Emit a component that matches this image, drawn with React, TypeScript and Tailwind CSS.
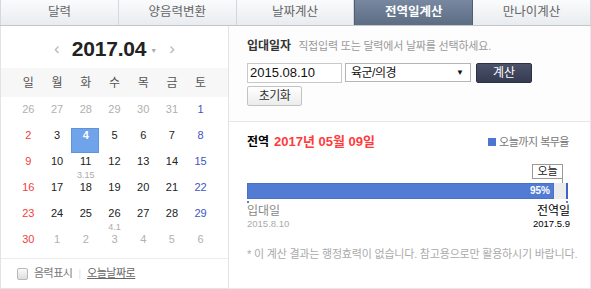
import { useState } from "react";

const TABS = ["달력", "양음력변환", "날짜계산", "전역일계산", "만나이계산"];
const WEEKDAYS = ["일", "월", "화", "수", "목", "금", "토"];

interface Day {
  day: number;
  other?: boolean;
  lunar?: string;
}

const WEEKS: Day[][] = [
  [
    { day: 26, other: true },
    { day: 27, other: true },
    { day: 28, other: true },
    { day: 29, other: true },
    { day: 30, other: true },
    { day: 31, other: true },
    { day: 1 },
  ],
  [2, 3, 4, 5, 6, 7, 8].map((d) => ({ day: d })),
  [9, 10, 11, 12, 13, 14, 15].map((d) => ({
    day: d,
    lunar: d === 11 ? "3.15" : undefined,
  })),
  [16, 17, 18, 19, 20, 21, 22].map((d) => ({ day: d })),
  [23, 24, 25, 26, 27, 28, 29].map((d) => ({
    day: d,
    lunar: d === 26 ? "4.1" : undefined,
  })),
  [
    { day: 30 },
    { day: 1, other: true },
    { day: 2, other: true },
    { day: 3, other: true },
    { day: 4, other: true },
    { day: 5, other: true },
    { day: 6, other: true },
  ],
];

const FONT = "font-['Liberation_Sans','Noto_Sans_CJK_KR',sans-serif]";

const dayColor = (d: Day, col: number) => {
  if (d.other) return "text-[#b0b0b0]";
  if (col === 0) return "text-[#f23c3c]";
  if (col === 6) return "text-[#3d56c0]";
  return "text-[#222]";
};

const Calendar = () => {
  const [selected] = useState(4);

  return (
    <div className="w-[229px] shrink-0 flex flex-col border-l border-r border-b border-[#e3e3e3]">
      <div className="h-[42px] pt-[2px] flex items-center justify-center">
        <span className="text-[#b5b5b5] text-[17px] leading-none mr-[12px]">‹</span>
        <span className="text-[21px] font-bold text-[#222] leading-none tracking-[-0.2px]">
          2017.04
        </span>
        <span className="text-[#aaa] text-[7px] ml-[4px] mt-[4px] leading-none">▼</span>
        <span className="text-[#b5b5b5] text-[17px] leading-none ml-[12px]">›</span>
      </div>

      <div className="h-[29px] bg-[#f7f7f7] px-[13px] grid grid-cols-7 items-center">
        {WEEKDAYS.map((w) => (
          <div key={w} className="text-center text-[12px] text-[#555] leading-none">
            {w}
          </div>
        ))}
      </div>

      <div className="mt-[3px] px-[13px] flex flex-col">
        {WEEKS.map((week, wi) => (
          <div key={wi} className="grid grid-cols-7 h-[26px]">
            {week.map((d, ci) => {
              const active = !d.other && d.day === selected;
              return (
                <div key={ci} className="relative flex flex-col items-center">
                  {active && (
                    <div className="absolute left-[0px] top-[2px] w-[28px] h-[25px] bg-[#6fa3ea] border border-[#5f93dd]" />
                  )}
                  <span
                    className={`relative mt-[2px] text-[11px] leading-[14px] ${
                      active ? "text-white font-bold" : dayColor(d, ci)
                    }`}>
                    {d.day}
                  </span>
                  {d.lunar && (
                    <span className="relative text-[9px] leading-[10px] text-[#aaa] mt-[2px]">
                      {d.lunar}
                    </span>
                  )}
                </div>
              );
            })}
          </div>
        ))}
      </div>

      <div className="mt-[2px] border-t border-[#ececec] flex-1 flex items-center pl-[16px]">
        <span className="w-[11px] h-[12px] rounded-[2px] border border-[#b9b9b9] bg-[linear-gradient(to_bottom,#fafafa,#dedede)] mr-[6px]" />
        <span className="text-[11px] text-[#777] tracking-[-0.5px]">음력표시</span>
        <span className="text-[10px] text-[#ddd] mx-[6px]">|</span>
        <a className="text-[11px] text-[#666] tracking-[-0.5px] underline cursor-pointer">
          오늘날짜로
        </a>
      </div>
    </div>
  );
};

const Calculator = () => {
  return (
    <div className="flex-1 min-w-0 flex flex-col border-r border-b border-[#e8e8e8]">
      <div className="pl-[18px] pt-[12px] pb-[14px] border-b border-[#e6e6e6] bg-[#fdfdfd]">
        <div className="flex items-center h-[16px]">
          <span className="text-[12px] font-bold text-[#333] mr-[7px]">입대일자</span>
          <span className="text-[11px] text-[#999] tracking-[-0.2px]">
            직접입력 또는 달력에서 날짜를 선택하세요.
          </span>
        </div>
        <div className="flex mt-[9px] h-[20px]">
          <div className="w-[95px] h-[20px] border border-[#c9c9c9] bg-white flex items-center pl-[2px] text-[13px] text-[#111]">
            2015.08.10
          </div>
          <div className="w-[126px] h-[19px] ml-[3px] border border-[#b5b5b5] bg-white flex items-center justify-between pl-[5px] pr-[6px]">
            <span className="text-[12px] text-[#111] tracking-[-0.5px]">육군/의경</span>
            <span className="text-[8px] text-[#111]">▼</span>
          </div>
          <button className="w-[56px] h-[20px] ml-[5px] rounded-[2px] bg-[linear-gradient(to_bottom,#4a5168,#353c52)] border border-[#2c3244] text-white text-[12px] leading-none">
            계산
          </button>
        </div>
        <button className="mt-[1px] w-[55px] h-[20px] rounded-[2px] border border-[#c3c3c3] bg-[linear-gradient(to_bottom,#ffffff,#ececec)] text-[12px] text-[#333] leading-none tracking-[-0.5px]">
          초기화
        </button>
      </div>

      <div className="pl-[18px] pr-[21px] pt-[12px] flex flex-col">
        <div className="flex items-center justify-between h-[16px]">
          <div className="flex items-center">
            <span className="text-[12px] font-bold text-black mr-[5px]">전역</span>
            <span className="text-[13px] font-bold text-[#ff3b3b]">2017년 05월 09일</span>
          </div>
          <div className="flex items-center">
            <span className="w-[8px] h-[8px] bg-[#4e75d0] mr-[3px]" />
            <span className="text-[11px] text-[#777] tracking-[-0.5px]">오늘까지 복무율</span>
          </div>
        </div>

        <div className="flex justify-end mt-[14px] pr-[6px]">
          <div className="flex flex-col items-end">
            <div className="w-[31px] h-[15px] border border-[#999] bg-white flex items-center justify-center text-[11px] text-[#222] leading-none">
              오늘
            </div>
            <div className="w-[1px] h-[4px] bg-[#999]" />
          </div>
        </div>

        <div className="flex w-[321px] h-[16px] bg-[#ececec] border-r-2 border-[#3f63c4]">
          <div className="w-[307px] h-full bg-[#527bd3] border border-[#4a70c8] flex items-center justify-end pr-[3px]">
            <span className="text-[10px] font-bold text-white leading-none">95%</span>
          </div>
        </div>

        <div className="flex justify-between w-[321px] h-[4px]">
          <span className="w-[2px] h-[2px] mt-[2px] bg-[#5a7fd6]" />
          <span className="w-[2px] h-[2px] mt-[2px] bg-[#5a7fd6]" />
        </div>

        <div className="flex justify-between w-[323px] mt-[1px]">
          <div className="flex flex-col">
            <span className="text-[12px] text-[#888] leading-[14px]">입대일</span>
            <span className="text-[9.5px] text-[#aaa] leading-[12px]">2015.8.10</span>
          </div>
          <div className="flex flex-col items-end">
            <span className="text-[12px] text-black leading-[14px]">전역일</span>
            <span className="text-[9.5px] text-black leading-[12px]">2017.5.9</span>
          </div>
        </div>

        <div className="mt-[17px] text-[11px] text-[#aaa] tracking-[-0.2px] leading-[14px] whitespace-nowrap">
          * 이 계산 결과는 행정효력이 없습니다. 참고용으로만 활용하시기 바랍니다.
        </div>
      </div>
    </div>
  );
};

const App = () => {
  const active = "전역일계산";

  return (
    <div className={`w-[591px] h-[289px] bg-white flex flex-col ${FONT}`}>
      <div className="flex h-[26px] border-b border-[#c3c7cc]">
        {TABS.map((tab, i) => (
          <div
            key={tab}
            className={`flex-1 flex items-center justify-center text-[12.5px] ${
              i === 0 ? "border-l border-[#d5d8dc]" : ""
            } ${
              tab === active
                ? "bg-[linear-gradient(to_bottom,#7888a0,#5c6c83)] text-white font-bold border-x border-[#4f5e73]"
                : "bg-[linear-gradient(to_bottom,#fafbfc,#e9ecef)] text-[#666] border-r border-[#d3d6da]"
            }`}>
            {tab}
          </div>
        ))}
      </div>
      <div className="flex flex-1">
        <Calendar />
        <Calculator />
      </div>
    </div>
  );
};

export default App;
